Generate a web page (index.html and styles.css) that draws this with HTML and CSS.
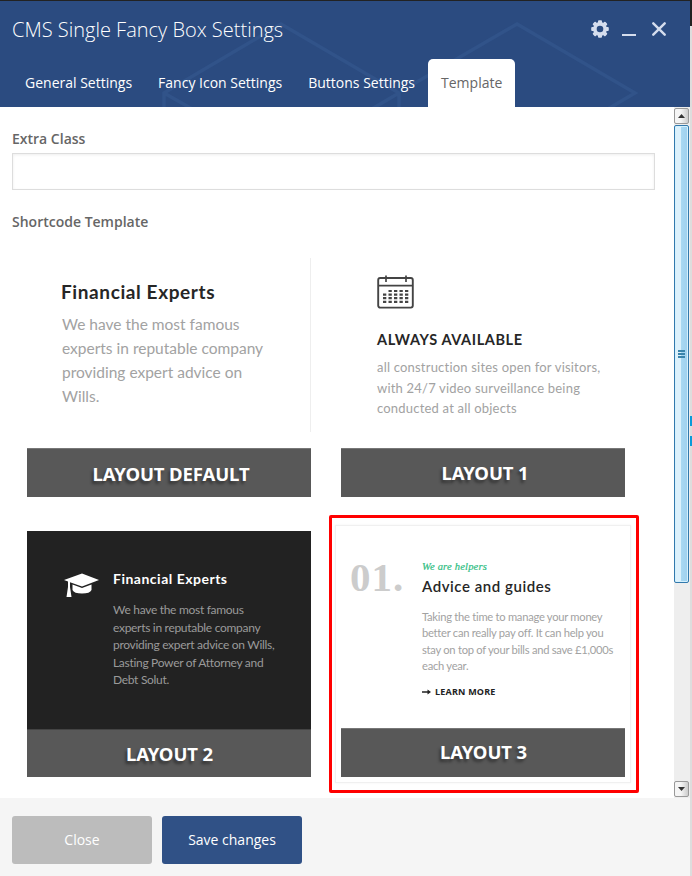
FILE: index.html
```html
<!DOCTYPE html>
<html lang="en">
<head>
<meta charset="utf-8">
<title>CMS Single Fancy Box Settings</title>
<link rel="stylesheet" href="styles.css">
</head>
<body>
<div class="screen">
  <div class="dialog">
    <header class="header">
      <svg class="pattern" width="690" height="106" viewBox="0 1 690 106" fill="none" stroke="#315389" stroke-width="3.5">
        <path d="M164 110V93L281 24L399 93V110M164 93L194 110M399 93L370 110M410 86L517 24L635 93L606 110"/>
      </svg>
      <div class="title-row">
        <h1>CMS Single Fancy Box Settings</h1>
        <div class="controls">
          <svg width="18" height="18" viewBox="-9 -9 18 18">
            <g fill="#d5dded">
              <rect x="-2" y="-8.8" width="4" height="17.6" rx="1"/>
              <rect x="-8.8" y="-2" width="17.6" height="4" rx="1"/>
              <g transform="rotate(45)"><rect x="-2" y="-8.8" width="4" height="17.6" rx="1"/><rect x="-8.8" y="-2" width="17.6" height="4" rx="1"/></g>
            </g>
            <circle r="5" fill="none" stroke="#d5dded" stroke-width="3.8"/>
            <circle r="3.3" fill="#2b4b80"/>
          </svg>
          <svg width="14" height="18" viewBox="0 0 14 18"><path d="M0 14h14v2H0z" fill="#d5dded"/></svg>
          <svg width="14" height="18" viewBox="0 0 14 18"><path d="M1.3 3.3l11.4 11.4M12.7 3.3L1.3 14.7" stroke="#d5dded" stroke-width="2.4" stroke-linecap="round"/></svg>
        </div>
      </div>
      <nav class="tabs">
        <a class="tab">General Settings</a>
        <a class="tab">Fancy Icon Settings</a>
        <a class="tab">Buttons Settings</a>
        <a class="tab active">Template</a>
      </nav>
    </header>

    <div class="middle">
      <main class="panel">
        <label class="label" for="extra">Extra Class</label>
        <input class="field" id="extra" type="text">
        <div class="label template-label">Shortcode Template</div>
        <div class="layouts">
          <section class="card card-default">
            <div class="preview">
              <h2>Financial Experts</h2>
              <p>We have the most famous<br>experts in reputable company<br>providing expert advice on<br>Wills.</p>
            </div>
            <div class="caption">LAYOUT DEFAULT</div>
          </section>
          <section class="card card-one">
            <div class="preview">
              <svg class="calendar" width="38" height="34" viewBox="0 0 38 34" fill="none" stroke="#444">
                <rect x="1.2" y="3" width="34.6" height="29.6" rx="2" stroke-width="1.9"/>
                <path d="M1 10.7H36M9 .5V7M29 .5V7" stroke-width="1.7"/>
                <path d="M11.500 16H32M6 19.600H32M6 23.200H32M6 26.800H32" stroke-width="2.2" stroke-dasharray="3.300 2.200"/>
              </svg>
              <h2>ALWAYS AVAILABLE</h2>
              <p>all construction sites open for visitors,<br>with 24/7 video surveillance being<br>conducted at all objects</p>
            </div>
            <div class="caption">LAYOUT 1</div>
          </section>
          <section class="card card-two">
            <div class="preview">
              <svg class="cap" width="36" height="26" viewBox="0 0 36 26" fill="#fff">
                <path d="M0 7L18 .5L35 7L18 13.500L6 9.200L6 14L7.500 24H2.500L4 14V8.500Z"/>
                <path d="M8.500 11.500L18 15L27.500 11.500V17Q26 20.500 18 20.500T8.500 17Z"/>
              </svg>
              <div>
                <h2>Financial Experts</h2>
                <p>We have the most famous<br>experts in reputable company<br>providing expert advice on Wills,<br>Lasting Power of Attorney and<br>Debt Solut.</p>
              </div>
            </div>
            <div class="caption">LAYOUT 2</div>
          </section>
          <section class="card card-three">
            <div class="preview">
              <div class="number">01.</div>
              <div>
                <div class="eyebrow">We are helpers</div>
                <h2>Advice and guides</h2>
                <p>Taking the time to manage your money<br>better can really pay off. It can help you<br>stay on top of your bills and save £1,000s<br>each year.</p>
                <div class="more"><svg width="9" height="6" viewBox="0 0 9 6"><path d="M0 2.300H5.500V.5L9 3L5.500 5.500V3.700H0Z" fill="#222"/></svg>LEARN MORE</div>
              </div>
            </div>
            <div class="caption">LAYOUT 3</div>
            <div class="outline"></div>
            <div class="marker"></div>
          </section>
        </div>
      </main>
      <div class="scrollbar">
        <div class="arrow"><svg width="7" height="4" viewBox="0 0 7 4"><path d="M0 4L3.500 0L7 4Z" fill="#333"/></svg></div>
        <div class="thumb"><i></i><i></i><i></i></div>
        <div class="track"></div>
        <div class="arrow"><svg width="7" height="4" viewBox="0 0 7 4"><path d="M0 0L3.500 4L7 0Z" fill="#333"/></svg></div>
      </div>
    </div>

    <footer class="footer">
      <button class="button close">Close</button>
      <button class="button save">Save changes</button>
    </footer>
  </div>
  <div class="backdrop"><b></b><b></b></div>
</div>
</body>
</html>
```
FILE: styles.css
```css
* { box-sizing: border-box; }
body { margin: 0; font: 14px/20px "Open Sans", sans-serif; color: #666; background: #fff; }
h1, h2, p { margin: 0; }
.screen { display: flex; width: 692px; height: 876px; overflow: hidden; }
.dialog { width: 690px; display: flex; flex-direction: column; border-top: 1px solid #222; }

.header { position: relative; flex: none; height: 106px; overflow: hidden; background: #2b4b80; color: #fff; display: flex; flex-direction: column; justify-content: space-between; }
.pattern { position: absolute; left: 0; top: 0; }
.title-row { position: relative; display: flex; justify-content: space-between; align-items: flex-start; padding: 14px 24px 0 12px; }
h1 { font-size: 20px; line-height: 30px; font-weight: 300; }
.controls { display: flex; gap: 14px; padding-top: 5px; }
.controls svg:last-child { margin-left: 2px; }
.controls svg:nth-child(2) { margin-left: -1px; }
.tabs { position: relative; display: flex; padding-left: 12px; }
.tab { height: 48px; padding: 0 13px; line-height: 48px; white-space: nowrap; }
.tab.active { background: #fff; color: #666; border-radius: 5px 5px 0 0; }

.middle { display: flex; flex: none; height: 691px; }
.panel { width: 674px; padding: 22px 19px 0 12px; }
.label { display: block; font-weight: 600; line-height: 20px; }
.field { display: block; width: 643px; height: 37px; margin-top: 4px; border: 1px solid #ddd; background: #fff; box-shadow: inset 0 1px 3px rgba(0,0,0,.07); }
.template-label { margin-top: 22px; }

.layouts { display: grid; grid-template-columns: 284px 284px; gap: 34px 30px; padding: 19px 0 0 15px; }
.card { position: relative; height: 246px; display: flex; flex-direction: column; font-family: Lato, sans-serif; }
.preview { flex: 1; white-space: nowrap; }
.caption { height: 49px; padding-left: 4px; background: #585858; border-top: 1px solid #777; color: #fff; font: 700 18.500px/49px "Noto Sans", sans-serif; letter-spacing: -.1px; text-align: center; text-shadow: -2px 3px 3px rgba(0,0,0,.4); }
.card h2 { color: #262626; font-weight: 700; }
.card p { color: #a2a2a2; }

.card-default .preview { padding: 23px 0 0 34px; border-right: 1px solid #eee; margin: 7px 0 16px; }
.card-default h2 { font-size: 19px; line-height: 22px; letter-spacing: .6px; }
.card-default p { margin: 9px 0 0 1px; font-size: 15.500px; line-height: 24px; letter-spacing: 0; }

.card-one .preview { padding: 24px 0 0 36px; }
.calendar { display: block; }
.card-one h2 { margin-top: 21px; font-size: 14.500px; line-height: 20px; letter-spacing: .6px; }
.card-one p { margin-top: 7px; font-size: 13px; line-height: 20.700px; letter-spacing: .2px; }
.card-one .caption { line-height: 47px; }

.card-two .preview { background: #222; display: flex; gap: 13px; padding: 39px 0 0 37px; }
.cap { margin-top: 3px; }
.card-two h2 { color: #fff; font-size: 14px; line-height: 18px; letter-spacing: .5px; }
.card-two p { margin-top: 13px; color: #9a9a9a; font-size: 12px; line-height: 17.600px; letter-spacing: -.3px; }
.card-two .caption { height: 48px; padding-left: 1px; border-color: #444; line-height: 48px; }

.card-three .preview { display: flex; padding: 27px 0 0 9px; }
.number { flex: none; width: 72px; color: #ccc; font: 700 41px/38px "Liberation Serif", serif; letter-spacing: 1px; }
.eyebrow { color: #2dbd82; font: italic 10.500px/18px "Liberation Serif", serif; letter-spacing: .2px; -webkit-text-stroke: .2px #2dbd82; }
.card-three h2 { font-size: 15px; line-height: 20px; font-weight: 600; letter-spacing: .55px; }
.card-three p { margin-top: 13px; font-size: 11.200px; line-height: 16.400px; letter-spacing: -.27px; }
.card-three .caption { padding-left: 1px; line-height: 46px; }
.more { display: flex; align-items: center; gap: 4px; margin-top: 11px; color: #222; font: 700 9px/12px "Open Sans", sans-serif; letter-spacing: .2px; }
.outline { position: absolute; inset: -6px -6px -6px -6px; border: 1px solid #f0f0f0; box-shadow: 0 0 2px rgba(0,0,0,.06); }
.marker { position: absolute; inset: -16px -14px -16px -12px; border: 3px solid #f00; border-radius: 2px; }

.scrollbar { width: 16px; display: flex; flex-direction: column; background: #eee; padding: 1px 1px 1px 0; }
.arrow { height: 16px; border: 1px solid #999; border-radius: 2px; background: linear-gradient(90deg, #f5f5f5 45%, #ccc); display: flex; align-items: center; justify-content: center; }
.thumb { height: 458px; margin-top: 1px; border: 1px solid #3279ad; border-radius: 2px; box-shadow: inset 0 0 0 1px #d5f0fc; background: linear-gradient(90deg, #dcf1fc 43%, #a9d9f3 43%, #9fd0ee); display: flex; flex-direction: column; justify-content: center; align-items: center; gap: 1px; }
.thumb i { width: 7px; height: 2px; background: #3984ac; }
.track { flex: 1; }

.footer { flex: 1; display: flex; gap: 10px; padding: 18px 12px 12px; background: #f5f5f5; }
.button { width: 140px; height: 48px; border: 0; border-radius: 3px; color: #fff; font: 14px/20px "Open Sans", sans-serif; }
.close { background: #bcbcbc; }
.save { background: #305186; }

.backdrop { width: 2px; background: #ddd; border-top: 26px solid #222; display: flex; flex-direction: column; gap: 10px; padding-top: 390px; }
.backdrop b { height: 10px; background: #0a9bd8; }
```
